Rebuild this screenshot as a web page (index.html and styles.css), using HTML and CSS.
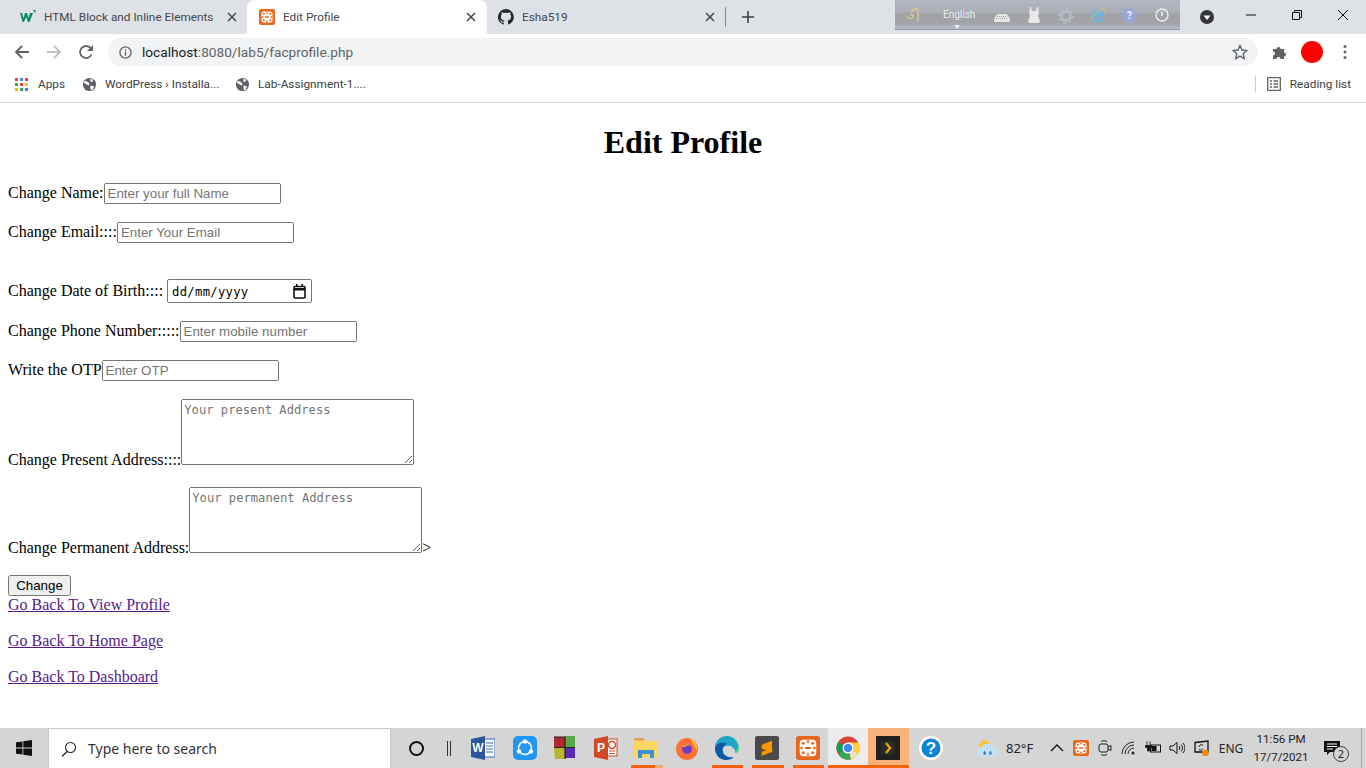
FILE: index.html
```html
<!DOCTYPE html>
<html lang="en">
<head>
  <meta charset="UTF-8" />
  <title>Edit Profile</title>
  <meta name="viewport" content="width=device-width, initial-scale=1.0" />
  <link rel="stylesheet" href="styles.css">
</head>
<body>
<svg class="defs" width="0" height="0">
  <symbol id="xampp" viewBox="0 0 16 16">
    <rect width="16" height="16" rx="2" fill="#e8671c"/>
    <rect x="2.500" y="2.500" width="11" height="11" rx="2.500" fill="#fff"/>
    <path d="M8 2.500l-1.400 1.800h2.800zM8 13.500l-1.400-1.800h2.800zM2.500 8l1.800-1.400v2.800zM13.500 8l-1.800-1.400v2.800zM6 7.300h4v1.400H6z" fill="#e8671c"/>
    <circle cx="4.800" cy="4.800" r="1" fill="#e8671c"/><circle cx="11.200" cy="4.800" r="1" fill="#e8671c"/>
    <circle cx="4.800" cy="11.200" r="1" fill="#e8671c"/><circle cx="11.200" cy="11.200" r="1" fill="#e8671c"/>
  </symbol>
  <symbol id="globe" viewBox="0 0 16 16">
    <circle cx="8" cy="8" r="7" fill="#5f6368"/>
    <path d="M3 4l3 1 2 2-1 2-2-1-3-2zM9 2l3 1-1 2-2 0zM9 9l4 1-2 4-2-1z" fill="#fff"/>
  </symbol>
  <symbol id="close" viewBox="0 0 10 10">
    <path d="M1 1l8 8M9 1l-8 8" stroke="#45474a" stroke-width="1.500" fill="none"/>
  </symbol>
</svg>

<div class="browser">
  <!-- Tabs -->
  <div class="tabstrip">
    <div class="tab">
      <svg class="favicon" viewBox="0 0 16 16"><path d="M0 4l2 0 1.500 5L5 4h2l1.500 5L10 4h3l-3.500 9H8L6 8l-2 5H2.500z" fill="#0f8a5f"/><path d="M13 1.500h2.500L14 3.200h1.500" stroke="#0f8a5f" stroke-width=".8" fill="none"/></svg>
      <span class="tab-title">HTML Block and Inline Elements</span>
      <svg class="tab-close"><use href="#close"/></svg>
    </div>
    <div class="tab tab-active">
      <svg class="favicon"><use href="#xampp"/></svg>
      <span class="tab-title">Edit Profile</span>
      <svg class="tab-close"><use href="#close"/></svg>
    </div>
    <div class="tab">
      <svg class="favicon" viewBox="0 0 16 16"><path d="M8 0a8 8 0 0 0-2.500 15.600c.4.100.5-.2.500-.4v-1.400c-2.200.5-2.700-1-2.700-1-.4-.9-.9-1.200-.9-1.200-.7-.5.100-.5.100-.5.800.100 1.200.8 1.200.8.700 1.200 1.900.9 2.300.7.100-.5.300-.9.500-1.100-1.800-.2-3.600-.9-3.600-4 0-.9.300-1.600.8-2.100-.1-.2-.4-1 .1-2.100 0 0 .7-.2 2.200.8a7.600 7.600 0 0 1 4 0c1.500-1 2.200-.8 2.200-.8.400 1.100.2 1.900.1 2.100.5.600.8 1.300.8 2.100 0 3.100-1.900 3.700-3.700 3.900.3.300.6.800.6 1.500v2.200c0 .2.100.5.600.4A8 8 0 0 0 8 0z" fill="#24292e"/></svg>
      <span class="tab-title">Esha519</span>
      <svg class="tab-close"><use href="#close"/></svg>
    </div>
    <span class="tab-sep"></span>
    <svg class="new-tab" viewBox="0 0 12 12"><path d="M6 0v12M0 6h12" stroke="#3c4043" stroke-width="1.600"/></svg>

    <div class="lang-bar">
      <svg class="lang-logo" viewBox="0 0 14 14"><path d="M.5 8.500c2 2.500 5.500 2.500 6.500.5S5.500 5.500 4 7.500M5 4c1.500-2 4-3.500 6-3 1.500 3 1.500 9 .5 13" stroke="#dcc88f" stroke-width="1.500" fill="none"/></svg>
      <div class="lang-pick">English<i class="lang-caret"></i></div>
      <svg class="lang-icon lang-kb" viewBox="0 0 16 8"><path d="M4 0h8c2 1 4 4 4 6.500a1.500 1.500 0 0 1-1.500 1.500h-13A1.500 1.500 0 0 1 0 6.500C0 4 2 1 4 0z" fill="#e6e6e6"/><path d="M3 2.500h10M2 4.500h12" stroke="#a6a6a6" stroke-dasharray="1 1"/></svg>
      <svg class="lang-icon lang-dress" viewBox="0 0 12 16"><path d="M2 0h1l1 4h4l1-4h1l1 6-1 3 2 5-1 2H1l-1-2 2-5-1-3z" fill="#e8e8e8"/></svg>
      <svg class="lang-icon lang-gear" viewBox="0 0 16 16"><circle cx="8" cy="8" r="4.500" fill="none" stroke="#b6bbc2" stroke-width="3"/><circle cx="8" cy="8" r="7" fill="none" stroke="#b6bbc2" stroke-width="2" stroke-dasharray="2.500 3"/></svg>
      <svg class="lang-icon lang-ie" viewBox="0 0 16 16"><path d="M13 8.500H5M13 8.500a5 5 0 1 0-1 3.500" fill="none" stroke="#62b6e6" stroke-width="2.500"/><path d="M2 14C0 11 8 3 14 1c2 0 1 3 0 5" fill="none" stroke="#d8bd7a"/></svg>
      <span class="lang-help">?</span>
      <svg class="lang-info" viewBox="0 0 14 14"><circle cx="7" cy="7" r="6" fill="none" stroke="#eceef2" stroke-width="1.400"/><path d="M7 3.500v4.500" stroke="#eceef2" stroke-width="1.600"/></svg>
    </div>

    <svg class="profile-down" viewBox="0 0 14 14"><circle cx="7" cy="7" r="7" fill="#35363a"/><path d="M3.500 5.500h7L7 10z" fill="#fff"/></svg>
    <div class="win-controls">
      <svg viewBox="0 0 46 30"><path d="M18 15h10" stroke="#111"/></svg>
      <svg viewBox="0 0 46 30"><path d="M18.500 12.500h7v7h-7zM20.500 12.500v-2h7v7h-2" stroke="#111" fill="none"/></svg>
      <svg viewBox="0 0 46 30"><path d="M18 10l10 10M28 10L18 20" stroke="#111" fill="none"/></svg>
    </div>
  </div>

  <!-- Address bar -->
  <div class="toolbar">
    <svg class="nav-btn" viewBox="0 0 16 16"><path d="M15 8H2M8 2L2 8l6 6" stroke="#5f6368" stroke-width="1.800" fill="none"/></svg>
    <svg class="nav-btn" viewBox="0 0 16 16"><path d="M1 8h13M8 2l6 6-6 6" stroke="#bdc1c6" stroke-width="1.800" fill="none"/></svg>
    <svg class="nav-btn" viewBox="0 0 16 16"><path d="M13.500 10.500A6 6 0 1 1 12.500 4L14 5.500" stroke="#5f6368" stroke-width="1.800" fill="none"/><path d="M15 1v6H9z" fill="#5f6368"/></svg>
    <div class="omnibox">
      <svg class="info-icon" viewBox="0 0 14 14"><circle cx="7" cy="7" r="6" fill="none" stroke="#5f6368" stroke-width="1.400"/><path d="M7 6v4.500M7 3.500v1.500" stroke="#5f6368" stroke-width="1.400"/></svg>
      <span class="url"><span class="url-host">localhost</span>:8080/lab5/facprofile.php</span>
      <svg class="star" viewBox="0 0 16 16"><path d="M8 1.500l2 4.500 4.800.5-3.600 3.200 1 4.800L8 12.100l-4.200 2.400 1-4.800L1.200 6.500 6 6z" fill="none" stroke="#5f6368" stroke-width="1.400"/></svg>
    </div>
    <svg class="puzzle" viewBox="0 0 16 16"><path d="M1 5h3.500a2 2 0 1 1 4 0H12v3.500a2 2 0 1 1 0 4V15H8.500a2 2 0 1 0-4 0H1v-3.500a2 2 0 1 0 0-4z" fill="#5f6368"/></svg>
    <span class="avatar"></span>
    <svg class="menu-dots" viewBox="0 0 4 16"><circle cx="2" cy="2.500" r="1.500"/><circle cx="2" cy="8" r="1.500"/><circle cx="2" cy="13.500" r="1.500"/></svg>
  </div>

  <!-- Bookmarks -->
  <div class="bookmarks">
    <svg class="apps" viewBox="0 0 13 13">
      <rect width="3" height="3" fill="#ea4335"/><rect x="5" width="3" height="3" fill="#4285f4"/><rect x="10" width="3" height="3" fill="#ea4335"/>
      <rect y="5" width="3" height="3" fill="#34a853"/><rect x="5" y="5" width="3" height="3" fill="#ea4335"/><rect x="10" y="5" width="3" height="3" fill="#fbbc05"/>
      <rect y="10" width="3" height="3" fill="#fbbc05"/><rect x="5" y="10" width="3" height="3" fill="#34a853"/><rect x="10" y="10" width="3" height="3" fill="#4285f4"/>
    </svg>
    <span class="bm-text bm-apps">Apps</span>
    <svg class="bm-globe"><use href="#globe"/></svg>
    <span class="bm-text bm-wp">WordPress › Installa...</span>
    <svg class="bm-globe"><use href="#globe"/></svg>
    <span class="bm-text">Lab-Assignment-1....</span>
    <span class="bm-sep"></span>
    <svg class="reading" viewBox="0 0 14 14"><path d="M.7.7h12.600v12.600H.7zM3 4h2M3 7h2M3 10h2M6.500 4H11M6.500 7H11M6.500 10H11" fill="none" stroke="#5f6368" stroke-width="1.300"/></svg>
    <span class="bm-text">Reading list</span>
  </div>
</div>

<!-- Page -->
<div class="page">
  <h1>Edit Profile</h1>
  <form>
    Change Name:<input type="text" class="field" placeholder="Enter your full Name"><br><br>
    Change Email::::<input type="text" class="field" placeholder="Enter Your Email"><br><br><br>
    Change Date of Birth:::: <span class="date-field"><span class="date-text">dd/mm/yyyy</span><svg class="date-icon" viewBox="0 0 13 15"><path d="M1 3.500a1 1 0 0 1 1-1h9a1 1 0 0 1 1 1V13a1 1 0 0 1-1 1H2a1 1 0 0 1-1-1z" fill="none" stroke="#111" stroke-width="1.600"/><path d="M1 4h11v2.500H1zM3 0h1.600v3H3zM8.400 0H10v3H8.400z" fill="#111"/></svg></span><br><br>
    Change Phone Number:::::<input type="text" class="field" placeholder="Enter mobile number"><br><br>
    Write the OTP<input type="text" class="field" placeholder="Enter OTP"><br><br>
    Change Present Address::::<textarea class="area" placeholder="Your present Address"></textarea><br><br>
    Change Permanent Address:<textarea class="area" placeholder="Your permanent Address"></textarea>&gt;<br><br>
    <button type="button" class="submit">Change</button>
  </form>
  <a href="#" class="back-link">Go Back To View Profile</a><br><br>
  <a href="#" class="back-link">Go Back To Home Page</a><br><br>
  <a href="#" class="back-link">Go Back To Dashboard</a>
</div>

<!-- Taskbar -->
<div class="taskbar">
  <div class="start">
    <svg viewBox="0 0 16 16"><path d="M0 2.300l6.500-.9v6.200H0zM7.300 1.300L16 0v7.600H7.300zM0 8.400h6.500v6.200L0 13.700zM7.300 8.400H16V16l-8.700-1.200z" fill="#111"/></svg>
  </div>
  <div class="search">
    <svg viewBox="0 0 16 16"><circle cx="9.500" cy="6.500" r="5" fill="none" stroke="#222" stroke-width="1.100"/><path d="M6 10.500L1 15.500" stroke="#222" stroke-width="1.200"/></svg>
    <span>Type here to search</span>
  </div>
  <div class="cortana"><span class="ring"></span></div>
  <div class="task-view"><i></i><i></i></div>

  <div class="apps-row">
    <div class="app app-word">
      <svg viewBox="0 0 24 24"><rect x="9" y="3" width="15" height="18" fill="#fff" stroke="#3a68ad"/><path d="M15 7h7M15 10h7M15 13h7M15 16h7" stroke="#3a68ad"/><path d="M0 3l14-3v24L0 21z" fill="#2b579a"/><text x="7" y="16" class="app-letter">W</text></svg>
    </div>
    <div class="app">
      <svg viewBox="0 0 24 24"><rect width="24" height="24" rx="5" fill="#2196f3"/><circle cx="12" cy="12" r="6.500" fill="none" stroke="#fff" stroke-width="1.500"/><circle cx="12" cy="5.500" r="2.200" fill="#fff"/><circle cx="6" cy="15.500" r="2.200" fill="#fff"/><circle cx="18" cy="15.500" r="2.200" fill="#fff"/></svg>
    </div>
    <div class="app">
      <svg viewBox="0 0 24 24"><path d="M1 1h11v10.500H1z" fill="#b3282d"/><path d="M12 0h10v11.500H12z" fill="#5ba84a"/><path d="M1 11.500h11V23H2z" fill="#b9b52e"/><path d="M12 11.500h10V22H12z" fill="#5b2bb0"/><path d="M1 1h11v22M1 11.500h21" stroke="#222" stroke-width="1.200" fill="none"/></svg>
    </div>
    <div class="app">
      <svg viewBox="0 0 24 24"><rect x="9" y="3" width="14" height="17" fill="#fff" stroke="#d24726"/><path d="M15 15h6M15 17.500h6" stroke="#d24726"/><circle cx="18" cy="9" r="3.500" fill="none" stroke="#d24726" stroke-width="1.500"/><path d="M0 3l14-3v24L0 21z" fill="#d24726"/><text x="7" y="16" class="app-letter">P</text></svg>
    </div>
    <div class="app app-open app-folder">
      <svg viewBox="0 0 24 24"><path d="M0 2h9l2 2.500H0z" fill="#e8a33d"/><path d="M0 5h24v17H0z" fill="#fcd462"/><path d="M4 14h16v8h-4v-4H8v4H4z" fill="#3a93d8"/></svg>
    </div>
    <div class="app">
      <svg viewBox="0 0 24 24"><circle cx="12" cy="13" r="11" fill="#ff7139"/><path d="M14 2c6 2 9 7 8 13-1-3-3-5-4-6 0-3-2-5-4-7z" fill="#ffbd2e"/><circle cx="12" cy="13" r="5" fill="#6d3fc0"/><path d="M7 11c2-3 6-4 9-1-3-1-5 0-6 1z" fill="#ff9a3a"/></svg>
    </div>
    <div class="app app-open">
      <svg viewBox="0 0 24 24"><path d="M24 13C24 5 18 0 12 0 5 0 0 5 0 12c0 7 5 12 11 12-4-2-6-6-5-9 1-4 5-6 9-5 4 1 6 5 5 7 2 0 4-2 4-4z" fill="#1ea6c9"/><path d="M0 12c0 7 5 12 11 12 3 0 6-1 8-3-5 1-10-1-11-5s1-7 4-9C6 6 1 7 0 12z" fill="#0c59a4"/><path d="M24 13c0-8-6-13-12-13 6 1 11 5 11 11l-3 6c2 0 4-2 4-4z" fill="#50d68a"/></svg>
    </div>
    <div class="app app-open">
      <svg viewBox="0 0 24 24"><rect width="24" height="24" rx="2" fill="#4a4a4a"/><path d="M17 5L7 9v3.500l10 3.500v-3.500L7 16v3.500L17 15.500M7 9l10 3.500" fill="#ff9800" stroke="#ff9800" stroke-width=".6"/></svg>
    </div>
    <div class="app app-open">
      <svg viewBox="0 0 16 16"><use href="#xampp"/></svg>
    </div>
    <div class="app app-open app-wide app-light">
      <svg viewBox="0 0 24 24"><circle cx="12" cy="12" r="11.500" fill="#db4437"/><path d="M12 12L1.500 17a11.500 11.500 0 0 1 1-11z" fill="#0f9d58"/><path d="M2 18l10-6 3 11.300A11.500 11.500 0 0 1 2 18z" fill="#34a853"/><path d="M12 6.500h10.500a11.500 11.500 0 0 1-7.500 17z" fill="#ffcd40"/><circle cx="12" cy="12" r="5.500" fill="#fff"/><circle cx="12" cy="12" r="4.300" fill="#4285f4"/><circle cx="17.500" cy="19" r="3.500" fill="#e9e3c7"/></svg>
    </div>
    <div class="app app-open app-wide app-active">
      <svg viewBox="0 0 24 24"><rect width="24" height="24" fill="#1f1f1f"/><rect x="5" y="5" width="14" height="14" fill="#2a2a2a"/><path d="M10 7l4 5-4 5" stroke="#e5a00d" stroke-width="2.500" fill="none"/></svg>
    </div>
    <div class="app app-help">
      <svg viewBox="0 0 24 24"><circle cx="12" cy="12" r="12" fill="#fff"/><circle cx="12" cy="12" r="9.500" fill="#0a84d8"/><text x="12" y="18" class="app-q">?</text></svg>
    </div>
  </div>

  <div class="tray">
    <div class="weather">
      <svg viewBox="0 0 22 22"><path d="M7 0l1.500 3.500L12 3l.5 3L5 11 1 7l3.500-1.500L3 3l3 .5z" fill="#f4c430"/><path d="M4.500 20a4.500 4.500 0 0 1-.5-9 7 7 0 0 1 13-1 5 5 0 0 1 .5 10z" fill="#c4e0f4"/><path d="M8 13l-1.500 3a1.500 1.500 0 0 0 3 0zM14 13l-1.500 3a1.500 1.500 0 0 0 3 0z" fill="#2b7fc4"/></svg>
      <span>82°F</span>
    </div>
    <svg class="tray-icon" viewBox="0 0 16 16"><path d="M2 11l6-6 6 6" stroke="#111" stroke-width="1.300" fill="none"/></svg>
    <svg class="tray-icon"><use href="#xampp"/></svg>
    <svg class="tray-icon" viewBox="0 0 16 16"><rect x="2" y="4" width="9" height="8" rx="2" fill="none" stroke="#222"/><path d="M11 7l3-1.500v5L11 9M4 1.500c2-1 4-1 6 0M4 14.500c2 1 4 1 6 0" stroke="#222" fill="none"/></svg>
    <svg class="tray-icon" viewBox="0 0 16 16"><path d="M1 14A12 12 0 0 1 13 2M4 14a9 9 0 0 1 9-9M7 14a6 6 0 0 1 6-6" stroke="#222" fill="none"/><circle cx="12" cy="13" r="1.500" fill="#222"/></svg>
    <svg class="tray-icon" viewBox="0 0 16 16"><rect x="5.500" y="5" width="10" height="7" fill="none" stroke="#111"/><rect x="6.500" y="6" width="5" height="5" fill="#111"/><path d="M2 1.500v4M5 1.500v4M.5 5.500h6v2H4.500v3.500H2.500V7.500H.5z" stroke="#111" fill="#111" stroke-width=".8"/></svg>
    <svg class="tray-icon" viewBox="0 0 16 16"><path d="M1 6h3l4-3.500v11L4 10H1z" fill="none" stroke="#111"/><path d="M10 6c1 1 1 3 0 4M12 4.500c2 2 2 5 0 7M14 3c2.500 3 2.500 7 0 10" stroke="#111" fill="none"/></svg>
    <svg class="tray-icon" viewBox="0 0 16 16"><path d="M2 2.500l13-1.500v11H2z" fill="none" stroke="#111" stroke-width="1.300"/><path d="M6 7c0-2 3-3 4-1.500M6 9.500c2 1 3 .5 4-1" stroke="#111" fill="none"/><circle cx="12.500" cy="13" r="3.300" fill="#f58a0b"/></svg>
    <span class="tray-lang">ENG</span>
    <div class="clock"><span>11:56 PM</span><span>17/7/2021</span></div>
    <div class="notify">
      <svg viewBox="0 0 16 16"><path d="M0 0h16v11H6l-3 3v-3H0z" fill="#111"/><path d="M3 3h10M3 5.500h10M3 8h6" stroke="#fff"/></svg>
      <span class="notify-count">2</span>
    </div>
    <span class="show-desktop"></span>
  </div>
</div>
</body>
</html>
```

FILE: styles.css
```css
* {
  box-sizing: border-box;
}

html, body {
  height: 100%;
}

body {
  margin: 0;
  display: flex;
  flex-direction: column;
  height: 768px;
  overflow: hidden;
  background: #fff;
  color: #000;
  font-family: "Liberation Serif", serif;
  font-size: 16px;
}

.defs {
  position: absolute;
}

svg {
  display: block;
  flex: none;
}

/* Browser chrome */
.browser {
  flex: none;
  font-family: Roboto, sans-serif;
  font-size: 11.8px;
  color: #3c4043;
}

.tabstrip {
  height: 34px;
  display: flex;
  align-items: center;
  background: #dee1e6;
  padding-left: 8px;
}

.tab {
  width: 240px;
  height: 34px;
  display: flex;
  align-items: center;
  padding: 0 11px 0 12px;
  margin-right: -1px;
  border-radius: 8px 8px 0 0;
}

.tab-active {
  background: #fff;
}

.favicon {
  width: 16px;
  height: 16px;
}

.tab-title {
  flex: 1;
  margin-left: 8px;
  white-space: nowrap;
  color: #45474a;
}

.tab-close {
  width: 10px;
  height: 10px;
}

.tab-sep {
  width: 1px;
  height: 20px;
  background: #888a8e;
}

.new-tab {
  width: 12px;
  height: 12px;
  margin-left: 16px;
}

.lang-bar {
  width: 285px;
  height: 30px;
  margin: 0 0 4px 141px;
  display: flex;
  align-items: center;
  padding-left: 11px;
  background: linear-gradient(#b3b6bf, #abaeb7 42%, #a0a1a5 48%, #a3a4a9 80%, #b3b6c3 96%);
  border-bottom: 1px solid #8f94a6;
}

.lang-logo {
  width: 14px;
  height: 14px;
}

.lang-pick {
  width: 30px;
  margin-left: 23px;
  font-size: 10px;
  line-height: 14px;
  color: #eceef2;
  white-space: nowrap;
  position: relative;
}

.lang-caret {
  position: absolute;
  left: 11px;
  top: 17px;
  border: 3px solid transparent;
  border-top: 4px solid #eceef2;
}

.lang-icon {
  width: 16px;
  height: 16px;
}

.lang-kb {
  height: 8px;
  margin-left: 21px;
  margin-top: 7px;
}

.lang-dress {
  width: 12px;
  margin-left: 18px;
  margin-top: 1px;
}

.lang-gear {
  margin-left: 18px;
  margin-top: 2px;
}

.lang-ie {
  margin-left: 16px;
  margin-top: 1px;
}

.lang-help {
  width: 15px;
  height: 15px;
  margin-left: 16px;
  margin-top: 1px;
  border-radius: 50%;
  background: #9aa6d8;
  font-size: 11px;
  font-weight: bold;
  line-height: 15px;
  text-align: center;
  color: #eef;
}

.lang-info {
  width: 14px;
  height: 14px;
  margin-left: 18px;
  margin-top: 1px;
}

.profile-down {
  width: 14px;
  height: 14px;
  margin-left: 20px;
}

.win-controls {
  display: flex;
  margin-left: 14px;
  margin-bottom: 4px;
}

.win-controls svg {
  width: 46px;
  height: 30px;
}

.toolbar {
  height: 36px;
  display: flex;
  align-items: center;
  padding: 0 12px 0 14px;
  background: #fff;
}

.nav-btn {
  width: 16px;
  height: 16px;
  margin-right: 16px;
}

.omnibox {
  width: 1150px;
  height: 28px;
  margin-left: -2px;
  display: flex;
  align-items: center;
  padding: 0 10px 0 11px;
  background: #f1f3f4;
  border-radius: 14px;
}

.info-icon {
  width: 13px;
  height: 13px;
}

.url {
  flex: 1;
  margin-left: 10px;
  font-size: 13.67px;
  color: #5f6368;
}

.url-host {
  color: #202124;
}

.star {
  width: 16px;
  height: 16px;
}

.puzzle {
  width: 16px;
  height: 16px;
  margin-left: 14px;
}

.avatar {
  width: 22px;
  height: 22px;
  margin-left: 13px;
  border-radius: 50%;
  background: #f00;
}

.menu-dots {
  width: 4px;
  height: 16px;
  margin-left: 20px;
  fill: #5f6368;
}

.bookmarks {
  height: 33px;
  display: flex;
  align-items: center;
  padding: 0 15px 4px;
  background: #fff;
  border-bottom: 1px solid #d6d7d9;
}

.apps {
  width: 13px;
  height: 13px;
}

.bm-text {
  white-space: nowrap;
}

.bm-apps {
  width: 27px;
  margin-left: 10px;
}

.bm-wp {
  width: 113px;
}

.bm-globe {
  width: 15px;
  height: 15px;
  margin-left: 17px;
  margin-right: 8px;
}

.bm-sep {
  width: 1px;
  height: 16px;
  margin-left: auto;
  background: #c8cacc;
}

.reading {
  width: 14px;
  height: 14px;
  margin: 0 9px 0 11px;
}

/* Form page */
.page {
  flex: 1;
  padding: 0 8px;
  overflow: hidden;
}

h1 {
  text-align: center;
}

.field {
  width: 177px;
  height: 21px;
  font-family: "Liberation Sans", sans-serif;
  font-size: 13.333px;
}

.date-field {
  display: inline-flex;
  align-items: center;
  justify-content: space-between;
  width: 145px;
  height: 24px;
  padding: 2px 5px 0 4px;
  border: 1px solid #767676;
  border-radius: 2px;
  font-family: "DejaVu Sans Mono", monospace;
  font-size: 12.2px;
}

.date-text {
  letter-spacing: .3px;
}

.date-icon {
  width: 13px;
  height: 15px;
}

.area {
  width: 233px;
  height: 66px;
  font-family: "DejaVu Sans Mono", monospace;
  font-size: 12.15px;
  line-height: 16px;
}

.submit {
  width: 63px;
  height: 21px;
  font-family: "Liberation Sans", sans-serif;
  font-size: 13.333px;
}

.back-link {
  color: #551a8b;
}

/* Taskbar */
.taskbar {
  height: 40px;
  flex: none;
  display: flex;
  align-items: stretch;
  background: #d5d5d5;
  font-family: "Noto Sans", sans-serif;
  color: #222;
}

.start {
  width: 48px;
  display: flex;
  align-items: center;
  justify-content: center;
}

.start svg {
  width: 16px;
  height: 16px;
}

.search {
  width: 343px;
  display: flex;
  align-items: center;
  padding-left: 12px;
  background: #fff;
  border: 1px solid #c8c8c8;
  border-bottom: 0;
  font-size: 14px;
  color: #333;
}

.search svg {
  width: 16px;
  height: 16px;
  margin-right: 11px;
}

.cortana {
  width: 50px;
  display: flex;
  align-items: center;
  justify-content: center;
}

.ring {
  width: 15px;
  height: 15px;
  border: 2px solid #111;
  border-radius: 50%;
}

.task-view {
  width: 20px;
  padding-left: 6px;
  display: flex;
  align-items: center;
  gap: 2px;
}

.task-view i {
  width: 1px;
  height: 15px;
  background: #333;
}

.apps-row {
  display: flex;
  flex: none;
  width: 505px;
  padding-left: 2px;
}

.app {
  width: 40.4px;
  display: flex;
  align-items: center;
  justify-content: center;
  position: relative;
}

.app svg {
  width: 24px;
  height: 24px;
}

.app-word {
  margin-right: 1.4px;
}

.app-help {
  margin-left: 2.6px;
}

.app-open::after {
  content: "";
  position: absolute;
  left: 5px;
  right: 4px;
  bottom: 0;
  height: 3px;
  background: #f7630c;
}

.app-wide::after {
  left: 0;
  right: 0;
}

.app-folder::after {
  background: linear-gradient(90deg, #f7630c 75%, #f4a878 75%);
  left: 5px;
  right: 3px;
}

.app-light {
  background: #ececec;
}

.app-active {
  background: #f9b27a;
}

.app-letter {
  font-family: "Liberation Sans", sans-serif;
  font-size: 12px;
  font-weight: bold;
  fill: #fff;
  text-anchor: middle;
}

.app-q {
  font-family: "Liberation Sans", sans-serif;
  font-size: 17px;
  font-weight: bold;
  fill: #fff;
  text-anchor: middle;
}

.tray {
  display: flex;
  align-items: center;
  flex: 1;
  font-size: 12px;
}

.weather {
  width: 79px;
  display: flex;
  align-items: center;
  padding-left: 11px;
  font-size: 13px;
}

.weather svg {
  width: 21px;
  height: 21px;
  margin-right: 8px;
}

.tray-icon {
  width: 16px;
  height: 16px;
  margin: 0 4px;
}

.tray-lang {
  width: 36px;
  text-align: center;
  font-size: 12px;
}

.clock {
  width: 64px;
  display: flex;
  flex-direction: column;
  align-items: center;
  gap: 3px;
  font-family: Roboto, sans-serif;
  font-size: 11.6px;
  line-height: 15px;
}

.notify {
  width: 40px;
  height: 40px;
  position: relative;
  padding: 13px 0 0 11px;
}

.notify svg {
  width: 16px;
  height: 16px;
}

.notify-count {
  position: absolute;
  left: 20px;
  top: 18px;
  width: 16px;
  height: 16px;
  border: 1px solid #444;
  border-radius: 50%;
  background: #d5d5d5;
  font-size: 11px;
  line-height: 14px;
  text-align: center;
}

.show-desktop {
  flex: 1;
  height: 100%;
  margin-left: 8px;
  border-left: 1px solid #aaa;
}
```
